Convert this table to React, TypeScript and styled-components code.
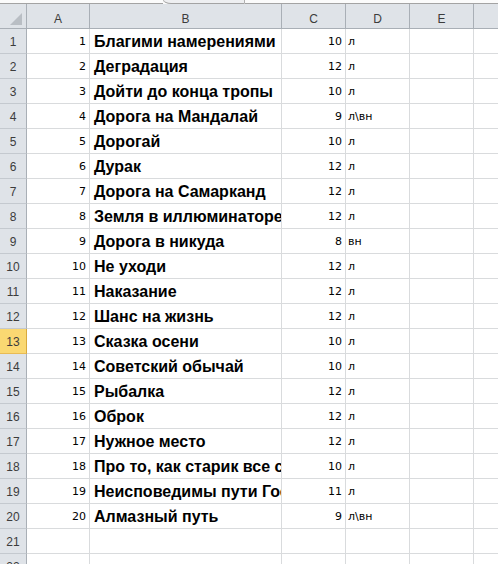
import React from "react";
import styled, { createGlobalStyle } from "styled-components";

const Global = createGlobalStyle`
  html, body { margin: 0; padding: 0; background: #ffffff; overflow: hidden; }
  body { width: 498px; height: 564px; }
`;

const Page = styled.div`
  width: 498px;
  height: 564px;
  overflow: hidden;
  background: #ffffff;
  display: flex;
  flex-direction: column;
`;

const TopStrip = styled.div`
  display: flex;
  height: 4px;
  flex: none;
  background: #fbfbfb;
`;

const StripLine = styled.div<{ $w?: number }>`
  flex: ${(p) => (p.$w ? `0 0 ${p.$w}px` : "1 1 auto")};
  border-bottom: 1px solid #a3a3a3;
  box-sizing: border-box;
`;

const StripTab = styled.div`
  flex: 0 0 82px;
  box-sizing: border-box;
  background: #eeeff1;
  border-left: 1px solid #b0b0b0;
  border-right: 1px solid #b0b0b0;
  border-bottom: 1px solid #a3a3a3;
  border-bottom-left-radius: 8px 4px;
`;

const COLS = "27px 63px 192px 64px 64px 64px 64px";

const Row = styled.div<{ $h: number }>`
  display: grid;
  grid-template-columns: ${COLS};
  height: ${(p) => p.$h}px;
  flex: none;
`;

const Corner = styled.div`
  box-sizing: border-box;
  background: #dfe3e8;
  border-right: 1px solid #a9afb6;
  border-bottom: 1px solid #a9afb6;
  display: flex;
  align-items: flex-end;
  justify-content: flex-end;
  padding: 0 4px 3px 0;
`;

const ColHead = styled.div`
  box-sizing: border-box;
  background: #dfe3e8;
  border-right: 1px solid #a9afb6;
  border-bottom: 1px solid #a9afb6;
  font-family: "Liberation Sans", Arial, sans-serif;
  font-size: 12px;
  color: #3c3c3c;
  display: flex;
  align-items: center;
  justify-content: center;
  padding-top: 5px;
`;

const RowHead = styled.div<{ $sel?: boolean }>`
  box-sizing: border-box;
  background: ${(p) => (p.$sel ? "#fad872" : "#dfe3e8")};
  border-right: 1px solid ${(p) => (p.$sel ? "#d8a93e" : "#a9afb6")};
  border-bottom: 1px solid ${(p) => (p.$sel ? "#e8bb55" : "#c4c9cf")};
  font-family: "Liberation Sans", Arial, sans-serif;
  font-size: 12px;
  color: #3c3c3c;
  display: flex;
  align-items: center;
  justify-content: center;
  padding-top: 2px;
`;

const Cell = styled.div<{ $align?: "left" | "right"; $big?: boolean }>`
  box-sizing: border-box;
  border-right: 1px solid #d9dbdd;
  border-bottom: 1px solid #d9dbdd;
  overflow: hidden;
  white-space: nowrap;
  display: flex;
  align-items: center;
  justify-content: ${(p) => (p.$align === "right" ? "flex-end" : "flex-start")};
  padding: ${(p) =>
    p.$big ? "1px 0 0 4px" : p.$align === "right" ? "1px 3px 0 0" : "1px 0 0 2px"};
  font-family: ${(p) =>
    p.$big ? `"Liberation Sans", Arial, sans-serif` : `"DejaVu Sans", Verdana, sans-serif`};
  font-size: ${(p) => (p.$big ? "16px" : "11px")};
  font-weight: ${(p) => (p.$big ? 700 : 400)};
  color: #000000;
  line-height: 22px;
`;

const data: [string, number, string][] = [
  ["Благими намерениями", 10, "л"],
  ["Деградация", 12, "л"],
  ["Дойти до конца тропы", 10, "л"],
  ["Дорога на Мандалай", 9, "л\\вн"],
  ["Дорогай", 10, "л"],
  ["Дурак", 12, "л"],
  ["Дорога на Самарканд", 12, "л"],
  ["Земля в иллюминаторе", 12, "л"],
  ["Дорога в никуда", 8, "вн"],
  ["Не уходи", 12, "л"],
  ["Наказание", 12, "л"],
  ["Шанс на жизнь", 12, "л"],
  ["Сказка осени", 10, "л"],
  ["Советский обычай", 10, "л"],
  ["Рыбалка", 12, "л"],
  ["Оброк", 12, "л"],
  ["Нужное место", 12, "л"],
  ["Про то, как старик все сделал", 10, "л"],
  ["Неисповедимы пути Господни", 11, "л"],
  ["Алмазный путь", 9, "л\\вн"],
];

const letters = ["A", "B", "C", "D", "E", ""];

export default function App() {
  const rows = [];
  for (let i = 1; i <= 22; i++) {
    const d = data[i - 1];
    rows.push(
      <Row $h={25} key={i}>
        <RowHead $sel={i === 13}>{i}</RowHead>
        <Cell $align="right">{d ? i : ""}</Cell>
        <Cell $big>{d ? d[0] : ""}</Cell>
        <Cell $align="right">{d ? d[1] : ""}</Cell>
        <Cell>{d ? d[2] : ""}</Cell>
        <Cell />
        <Cell />
      </Row>
    );
  }
  return (
    <Page>
      <Global />
      <TopStrip>
        <StripLine $w={163} />
        <StripTab />
        <StripLine />
      </TopStrip>
      <Row $h={25}>
        <Corner>
          <svg width="12" height="12" viewBox="0 0 12 12">
            <polygon points="12,0 12,12 0,12" fill="#b9bec4" />
          </svg>
        </Corner>
        {letters.map((l, idx) => (
          <ColHead key={idx}>{l}</ColHead>
        ))}
      </Row>
      {rows}
    </Page>
  );
}
